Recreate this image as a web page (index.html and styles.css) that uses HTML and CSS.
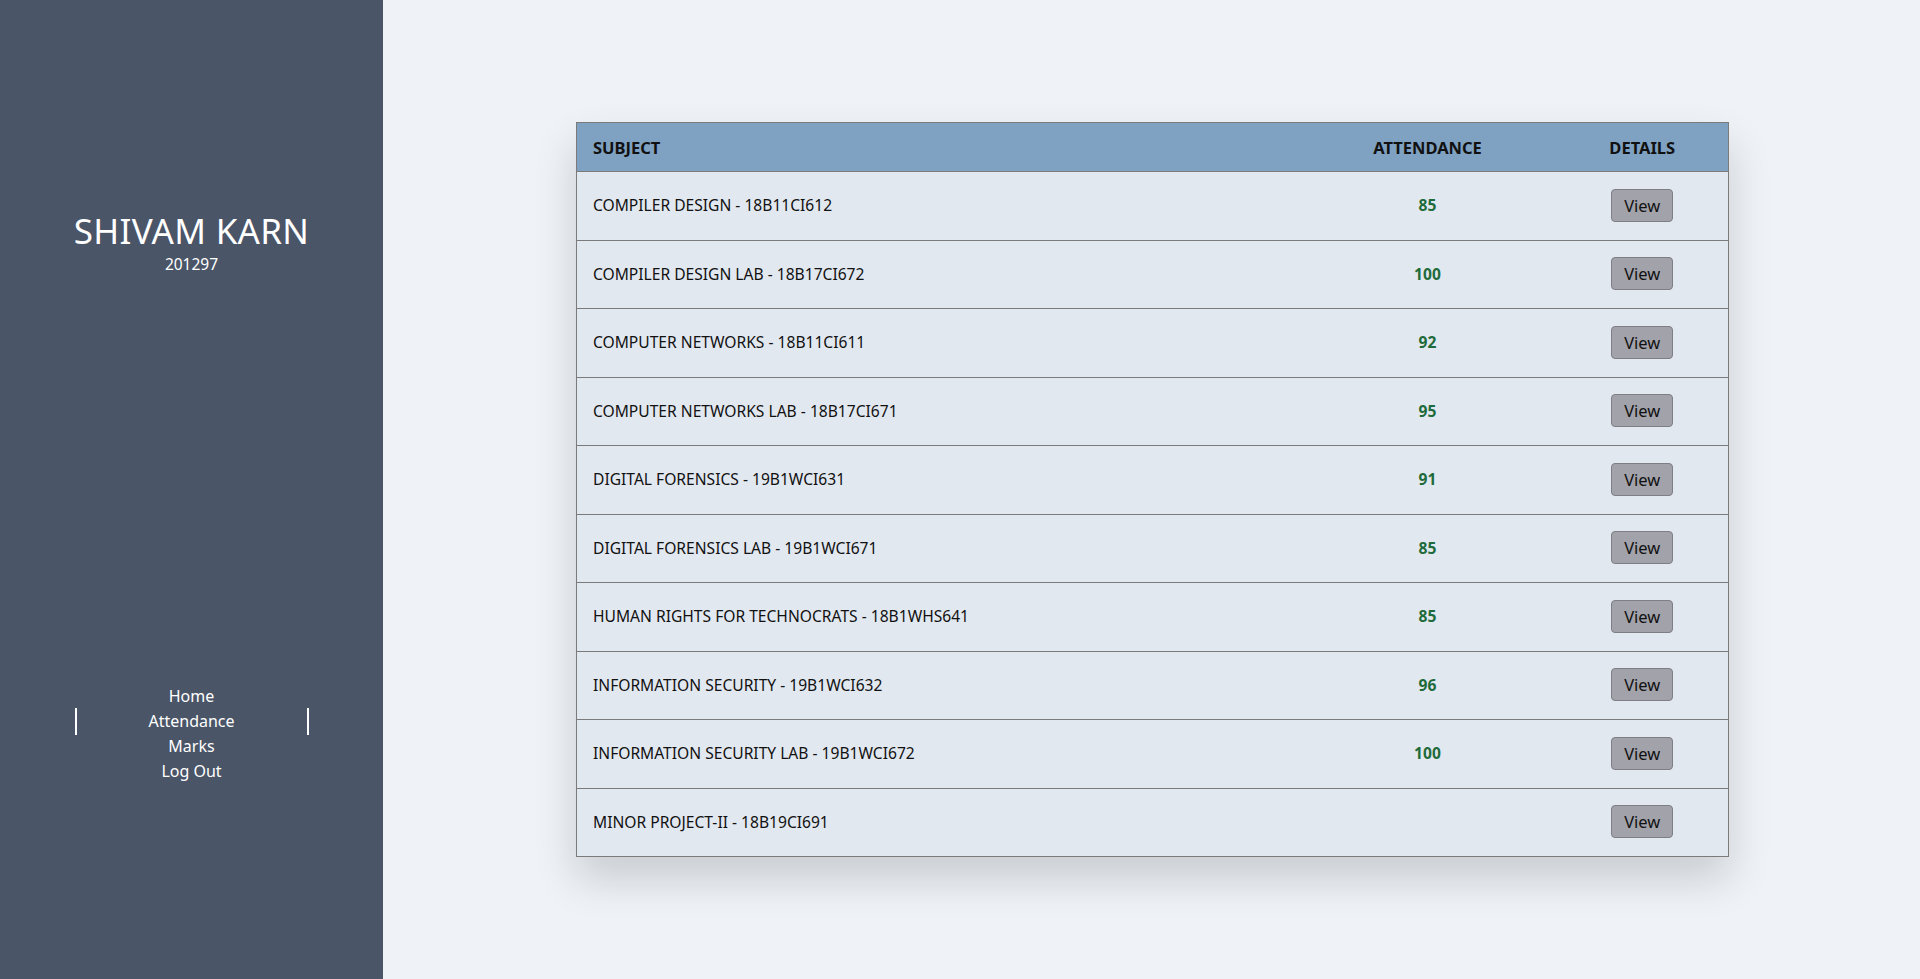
FILE: index.html
```html
<!DOCTYPE html>
<html lang="en">
<head>
<meta charset="utf-8">
<title>Attendance</title>
<link rel="stylesheet" href="styles.css">
</head>
<body>
<div class="layout">
  <aside class="sidebar">
    <div class="profile">
      <div class="name">SHIVAM KARN</div>
      <div class="roll">201297</div>
    </div>
    <nav class="nav">
      <a class="nav-link" href="#">Home</a>
      <a class="nav-link active" href="#">Attendance</a>
      <a class="nav-link" href="#">Marks</a>
      <a class="nav-link" href="#">Log Out</a>
    </nav>
  </aside>
  <main class="main">
    <table class="att-table">
      <colgroup>
        <col class="c-subj">
        <col class="c-att">
        <col class="c-det">
      </colgroup>
      <thead>
        <tr><th class="subj">SUBJECT</th><th>ATTENDANCE</th><th>DETAILS</th></tr>
      </thead>
      <tbody>
        <tr><td class="subj">COMPILER DESIGN - 18B11CI612</td><td class="pct">85</td><td class="det"><button class="view">View</button></td></tr>
        <tr><td class="subj">COMPILER DESIGN LAB - 18B17CI672</td><td class="pct">100</td><td class="det"><button class="view">View</button></td></tr>
        <tr><td class="subj">COMPUTER NETWORKS - 18B11CI611</td><td class="pct">92</td><td class="det"><button class="view">View</button></td></tr>
        <tr><td class="subj">COMPUTER NETWORKS LAB - 18B17CI671</td><td class="pct">95</td><td class="det"><button class="view">View</button></td></tr>
        <tr><td class="subj">DIGITAL FORENSICS - 19B1WCI631</td><td class="pct">91</td><td class="det"><button class="view">View</button></td></tr>
        <tr><td class="subj">DIGITAL FORENSICS LAB - 19B1WCI671</td><td class="pct">85</td><td class="det"><button class="view">View</button></td></tr>
        <tr><td class="subj">HUMAN RIGHTS FOR TECHNOCRATS - 18B1WHS641</td><td class="pct">85</td><td class="det"><button class="view">View</button></td></tr>
        <tr><td class="subj">INFORMATION SECURITY - 19B1WCI632</td><td class="pct">96</td><td class="det"><button class="view">View</button></td></tr>
        <tr><td class="subj">INFORMATION SECURITY LAB - 19B1WCI672</td><td class="pct">100</td><td class="det"><button class="view">View</button></td></tr>
        <tr><td class="subj">MINOR PROJECT-II - 18B19CI691</td><td class="pct"></td><td class="det"><button class="view">View</button></td></tr>
      </tbody>
    </table>
  </main>
</div>
</body>
</html>
```
FILE: styles.css
```css
* { box-sizing: border-box; }
html, body { margin: 0; padding: 0; height: 100%; }
body {
  font-family: "Noto Sans", "Open Sans", sans-serif;
  background: #eff3f8;
  color: #111;
}
.layout {
  display: flex;
  height: 979px;
}
.sidebar {
  width: 383px;
  flex: none;
  background: #4a5568;
  color: #fff;
  display: flex;
  flex-direction: column;
  align-items: center;
  padding-top: 209px;
}
.profile { text-align: center; }
.name {
  font-size: 35px;
  line-height: 44px;
  letter-spacing: 0.3px;
}
.roll {
  font-size: 15.5px;
  line-height: 22px;
}
.nav {
  margin-top: 409px;
  display: flex;
  flex-direction: column;
  align-items: center;
  width: 234px;
}
.nav-link {
  display: block;
  width: 100%;
  text-align: center;
  color: #fff;
  text-decoration: none;
  font-size: 16px;
  line-height: 25px;
}
.nav-link.active {
  border-left: 2px solid #fff;
  border-right: 2px solid #fff;
  line-height: 27px;
  margin: -1px 0;
}
.main {
  flex: 1;
  padding: 122px 0 0 193px;
}
.att-table {
  width: 1152px;
  border-collapse: collapse;
  table-layout: fixed;
  background: #e2e8f0;
  border: 1px solid #7b7b7b;
  box-shadow: 0 22px 40px rgba(0, 0, 0, 0.16);
  font-size: 15.6px;
}
.c-subj { width: 722px; }
.c-att { width: 258px; }
.c-det { width: 172px; }
.att-table th {
  background: #7fa1c2;
  height: 49px;
  font-size: 16.5px;
  font-weight: 700;
  text-align: center;
  padding: 0;
  border-bottom: 1px solid #7b7b7b;
}
.att-table td {
  height: 68.5px;
  padding: 0 0 1px;
  border-bottom: 1px solid #7b7b7b;
  text-align: center;
}
.att-table .subj {
  text-align: left;
  padding-left: 16px;
}
.pct {
  color: #1f6b3b;
  font-weight: 700;
}
.view {
  font-family: inherit;
  font-size: 16.5px;
  color: #111;
  background: #a2a2aa;
  border: 1px solid #7e7e84;
  border-radius: 4px;
  width: 62px;
  height: 33px;
  padding: 0;
  cursor: pointer;
}
```
